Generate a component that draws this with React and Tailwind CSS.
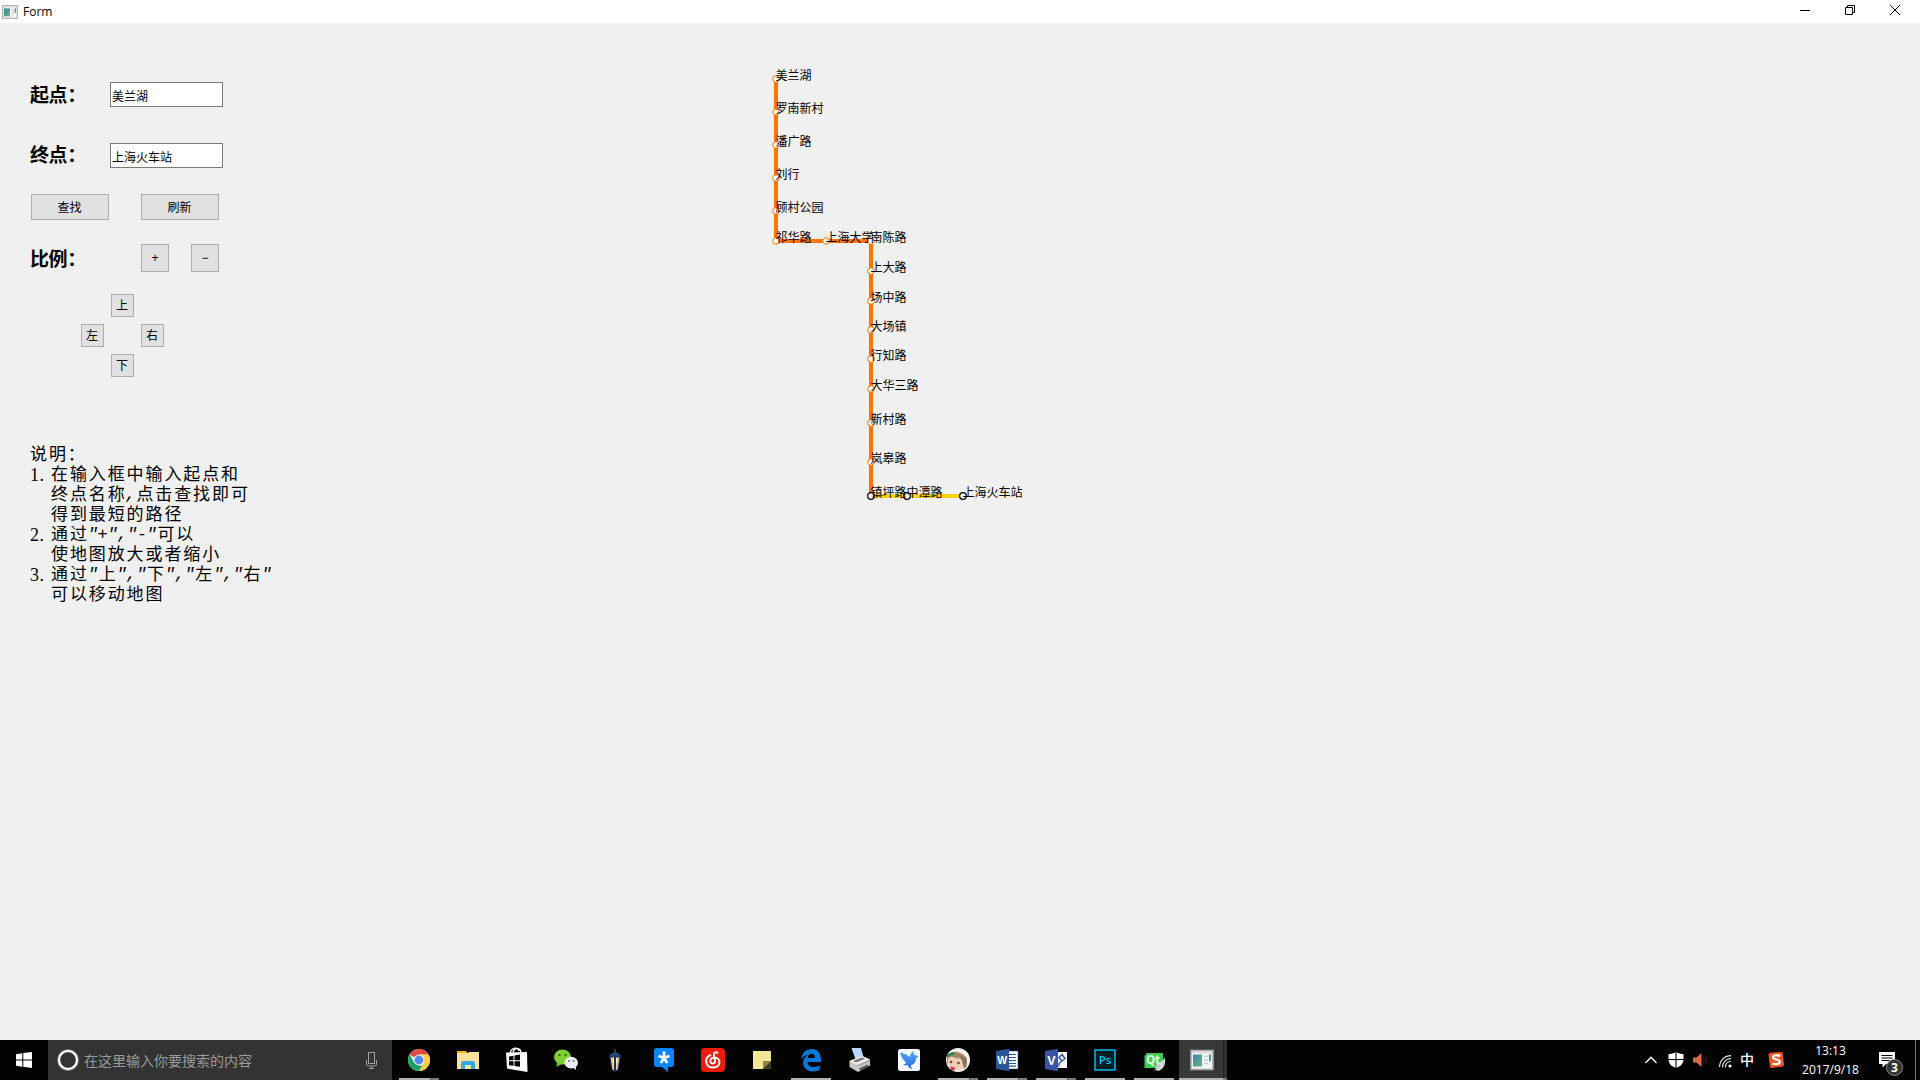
import React from "react";

const UI = "font-['Liberation_Sans','Noto_Sans_CJK_SC',sans-serif]";

const STATIONS = [
  { name: "美兰湖", x: 776, y: 79 },
  { name: "罗南新村", x: 776, y: 112 },
  { name: "潘广路", x: 776, y: 145 },
  { name: "刘行", x: 776, y: 178 },
  { name: "顾村公园", x: 776, y: 211 },
  { name: "祁华路", x: 776, y: 241 },
  { name: "上海大学", x: 826, y: 241 },
  { name: "南陈路", x: 871, y: 241 },
  { name: "上大路", x: 871, y: 271 },
  { name: "场中路", x: 871, y: 301 },
  { name: "大场镇", x: 871, y: 330 },
  { name: "行知路", x: 871, y: 359 },
  { name: "大华三路", x: 871, y: 389 },
  { name: "新村路", x: 871, y: 423 },
  { name: "岚皋路", x: 871, y: 462 },
  { name: "镇坪路", x: 871, y: 496, transfer: true },
  { name: "中潭路", x: 907, y: 496, transfer: true },
  { name: "上海火车站", x: 963, y: 496, transfer: true },
];

const TITLE_HEIGHT = 23;

function RouteMap() {
  return (
    <div className="absolute inset-0 pointer-events-none">
      <svg className="absolute left-0 top-0" width="1920" height="1017" viewBox="0 23 1920 1017">
        <path d="M871 496H963" stroke="#ffd200" strokeWidth="4" fill="none" />
        <path d="M776 79V241H871V496" stroke="#ff7300" strokeWidth="4" fill="none" />
        {STATIONS.map((s) => (
          <circle
            key={s.name}
            cx={s.x}
            cy={s.y}
            r="3.3"
            fill="#fff"
            stroke={s.transfer ? "#000" : "#ff7300"}
            strokeWidth={s.transfer ? 1.3 : 1}
          />
        ))}
      </svg>
      {STATIONS.map((s) => (
        <span
          key={s.name}
          className="absolute text-[12px] leading-[14px] whitespace-nowrap text-black"
          style={{ left: s.x - 0.5, top: s.y - TITLE_HEIGHT - 10 }}
        >
          {s.name}
        </span>
      ))}
    </div>
  );
}

function Button({ className, children }) {
  return (
    <button
      className={`flex shrink-0 items-center justify-center border border-[#adadad] bg-[#e1e1e1] text-[12px] leading-none text-black ${className}`}
    >
      {children}
    </button>
  );
}

function FieldLabel({ className = "", children }) {
  return (
    <span className={`w-20 shrink-0 whitespace-nowrap text-[19px] leading-[24px] font-bold tracking-[-0.4px] text-black ${className}`}>
      {children}
    </span>
  );
}

function Field({ label, value, className, labelClass }) {
  return (
    <label className={`flex h-[25px] items-center ${className}`}>
      <FieldLabel className={labelClass}>{label}</FieldLabel>
      <input
        readOnly
        value={value}
        className="h-[25px] w-[113px] border border-[#7a7a7a] bg-white pt-px pl-px text-[12px] text-black outline-none"
      />
    </label>
  );
}

const HELP = [
  ["", "说明："],
  ["1.", "在输入框中输入起点和"],
  [" ", "终点名称,点击查找即可"],
  [" ", "得到最短的路径"],
  ["2.", '通过"+","-"可以'],
  [" ", "使地图放大或者缩小"],
  ["3.", '通过"上","下","左","右"'],
  [" ", "可以移动地图"],
];

function HelpLine({ mark, text }) {
  const runs = text.split(/([",+\-]+)/).filter(Boolean);
  return (
    <div className="flex h-[20px] whitespace-pre">
      {mark && (
        <span className="w-[21px] font-['Liberation_Serif',serif] text-[18px] tracking-[0.5px]">{mark}</span>
      )}
      {runs.map((run, i) =>
        /[",+\-]/.test(run) ? (
          <span key={i} className="-ml-px mr-px font-['Liberation_Mono',monospace] text-[17px] tracking-[-0.4px] italic">
            {run}
          </span>
        ) : (
          <span key={i} className="text-[17px] tracking-[1.9px]">
            {run}
          </span>
        )
      )}
    </div>
  );
}

function FormIcon({ size }) {
  return (
    <svg width={size} height={size} viewBox="0 0 24 24">
      <defs>
        <linearGradient id="pane" x1="0" y1="0" x2="1" y2="1">
          <stop offset="0" stopColor="#4a7fb0" />
          <stop offset="1" stopColor="#5fb87a" />
        </linearGradient>
      </defs>
      <rect x="1" y="2.5" width="22" height="19" fill="#f4f4f4" stroke="#a3a9ad" strokeWidth="1.6" />
      <path d="M2 4.5h20" stroke="#d5d8da" strokeWidth="1.4" />
      <rect x="3" y="6.5" width="9" height="12" fill="url(#pane)" />
      <path d="M14 8.5h4M14 12h4M14 15.500h4" stroke="#c9cccf" strokeWidth="1.6" />
      <rect x="19" y="6.500" width="2" height="7" fill="url(#pane)" />
    </svg>
  );
}

const ICONS = {
  chrome: (
    <>
      <circle cx="12" cy="12" r="11" fill="#e9f0ea" />
      <path d="M12 12 2.500 6.500A11 11 0 0 1 21.500 6.500H12z" fill="#dd4b3e" />
      <path d="M12 6.500h9.500A11 11 0 0 1 12 23l4.800-8.300z" fill="#ffcd42" />
      <path d="M2.500 6.500 7.300 14.700 12 17.500h3.200L12 23A11 11 0 0 1 2.500 6.500z" fill="#1aa260" />
      <circle cx="12" cy="12" r="5.400" fill="#f1f1f1" />
      <circle cx="12" cy="12" r="4.400" fill="#4a8af4" />
    </>
  ),
  folder: (
    <>
      <path d="M1 3h9l1.500 2H22v15H1z" fill="#f0c34a" />
      <path d="M1 5h11l1-1h10v17H1z" fill="#fbe29a" />
      <path d="M1 3h9v2H1z" fill="#f5b400" />
      <path d="M5 21v-6.500L6.500 13h11l1.500 1.500V21h-4v-4H9v4z" fill="#35a9e1" />
    </>
  ),
  store: (
    <>
      <path d="M5 5.500C6 0 12-2 14 3M8 4.500C9 0 15-1 16 4" stroke="#fff" strokeWidth="1.300" fill="none" />
      <path d="M1 4.500 22 4l.500 20L2 20.500z" fill="#fff" />
      <path d="M4 8.500l4.500-.800v4.600H4zM9.500 7.500l5.500-.900v5.700H9.500zM4 13.300h4.500v4.500L4 17.200zM9.500 13.300H15v5.500l-5.500-.800z" fill="#000" />
    </>
  ),
  wechat: (
    <>
      <ellipse cx="8.500" cy="9" rx="8.500" ry="7.500" fill="#7bd032" />
      <path d="M3 14 2.500 19 8 16z" fill="#6bc125" />
      <circle cx="5.500" cy="7" r="1.100" fill="#24520a" />
      <circle cx="11.500" cy="7" r="1.100" fill="#24520a" />
      <ellipse cx="17.200" cy="14.700" rx="6.800" ry="5.900" fill="#eceff1" />
      <path d="M19 19.500l3 2.500v-5z" fill="#dfe3e6" />
      <circle cx="15" cy="13" r=".9" fill="#666" />
      <circle cx="19.500" cy="13" r=".9" fill="#666" />
    </>
  ),
  lantern: (
    <>
      <path d="M11.200 1h1.600v3l4.700 2.500V9h-11V6.500L11.200 4z" fill="#1f4778" />
      <path d="M6.200 8.500h11.600L15.500 21l-2 2.500h-3l-2-2.500z" fill="#16304f" />
      <path d="M7.600 9.500h2.200l1 12.500h-1.300z" fill="#f2c873" />
      <path d="M9.800 9.500h1.200V22h-.4z" fill="#fff" />
      <path d="M16.400 9.500h-2.200l-1 12.500h1.300z" fill="#f2c873" />
      <path d="M14.200 9.500H13V22h.4z" fill="#fff" />
    </>
  ),
  star: (
    <>
      <path d="M5 0h14q3 0 3 3v13q0 3-3 3h-3v5l-6-5H5q-3 0-3-3V3q0-3 3-3z" fill="#0a84ff" />
      <path d="M12 3.500v6M12 9.800 6.500 8M12 9.800 17.500 8M12 9.800 8.800 15M12 9.800l3.200 5.200" stroke="#fff" strokeWidth="2.700" />
    </>
  ),
  netease: (
    <>
      <rect width="24" height="24" rx="4" fill="#eb1c0b" />
      <path d="M16.500 4.800c-2-1.200-4 0-3.600 2l1.300 5.800c.4 3.800-4.900 3.800-4.900.4 0-3 3.500-4.300 6.400-3 4.600 2.200 3.300 9.500-3.500 9.500-8.300 0-9.200-9.800-2.700-12.300" stroke="#fff" strokeWidth="1.900" strokeLinecap="round" fill="none" />
    </>
  ),
  note: (
    <>
      <path d="M3 3h18v10l-8 8H3z" fill="#f3e696" />
      <path d="M13 13h8v8h-8z" fill="#3f3a22" />
      <path d="M13 13h8l-8 8z" fill="#8f854c" />
    </>
  ),
  edge: (
    <path d="M2 11.500C3 5 7 1 12.500 1 19 1 22 6 22 11v3H8.500c.3 3.700 3.200 5 6.300 5 2.400 0 4.500-.7 6-1.700v4.500C19 23 16.500 23.500 14 23.500 8 23.500 4 20 4 14.800c0-3.600 2-6.500 5-8C6.500 7 4 8.600 2 11.500zM8.800 10H16c0-2.800-1.200-4.300-3.400-4.300-2.300 0-3.600 1.900-3.800 4.300z" fill="#0078d7" />
  ),
  printer: (
    <>
      <path d="M3.500 0h9.500l2.500 9-8 2.500z" fill="#b9d6fb" />
      <path d="M1.500 13 14 8l8 3.500v6L10 24l-8.500-5z" fill="#c9c9c9" />
      <path d="M1.500 13 14 8l8 3.500L9.500 17z" fill="#ededed" />
      <path d="M9.500 17 22 11.500v2L9.500 19z" fill="#a9a9a9" />
      <path d="M5 13l9-3.500 3 1.300-9 3.800z" fill="#777" />
      <path d="M11 20.500l8.500-4 1 1.500-8 4.500z" fill="#4f4f4f" />
    </>
  ),
  bird: (
    <>
      <defs>
        <linearGradient id="wing" x1="0" y1="0" x2="0" y2="1">
          <stop offset="0" stopColor="#59aefb" />
          <stop offset="1" stopColor="#1f66e5" />
        </linearGradient>
      </defs>
      <rect x="1" y="1" width="22" height="22" rx="2.500" fill="#f5f8ff" />
      <path d="M3 4.500c3.500.5 7 1.800 9.500 4.500C13.500 6 14.500 4 16.500 2.500c-.3 2 .2 3.500 1.200 4.800 1.800-.5 3 .2 3.800 1.700-2 0-2.500.8-2.700 2.500-.4 3.200-2 5-4.800 5.500-.3 1.800.2 3 1.500 4.500-2.500-.8-4-2.300-5-4.500-1.500.6-3 .6-4.500 0 1.500-.6 2.500-1.400 3.200-2.500C6 12 4 9 3 4.500z" fill="url(#wing)" />
    </>
  ),
  avatar: (
    <>
      <circle cx="12" cy="12" r="12" fill="#f5f3ef" />
      <path d="M1 8c5-7 15-5 20 2v8l-3 3-4-11-6-2-4 3-3 5z" fill="#a58f6b" />
      <path d="M2 11c4-4 10-4 14 1l1 8c-4 4-12 3-15-3z" fill="#efd0b5" />
      <path d="M1 6l6-2 3 2-5 2-4 1z" fill="#388457" />
      <path d="M12 7c5 0 8 3 9 8l-3 5c0-5-2-9-6-13z" fill="#87745a" />
      <path d="M5 9l5-2 4 4-5-1.500z" fill="#9a8362" />
      <circle cx="5" cy="14" r="1.300" fill="#68493f" />
      <circle cx="12.500" cy="15" r="1.300" fill="#68493f" />
      <path d="M4.500 18.500l4.500 1-1 3.500-3-1.500z" fill="#c93647" />
    </>
  ),
  word: (
    <>
      <rect x="12" y="3" width="11" height="18" fill="#fff" stroke="#2b579a" strokeWidth=".6" />
      <path d="M14 6.500h7M14 9.500h7M14 12.500h7M14 15.500h7M14 18.200h7" stroke="#2b579a" strokeWidth="1.200" />
      <path d="M1 3 14 .800v22.400L1 21z" fill="#2b579a" />
      <text x="7.300" y="16" textAnchor="middle" fontSize="10.500" fontWeight="700" fontFamily="Liberation Sans" fill="#fff">W</text>
    </>
  ),
  visio: (
    <>
      <rect x="12" y="4" width="11" height="16" fill="#fff" />
      <path d="M15 18.500v-3l6-5-3-4-3 3 3 3.500" stroke="#3955a3" strokeWidth="1.500" fill="none" />
      <path d="M1 3 14 .800v22.400L1 21z" fill="#3955a3" />
      <text x="7.300" y="16.500" textAnchor="middle" fontSize="12.500" fontWeight="700" fontFamily="Liberation Sans" fill="#fff">V</text>
    </>
  ),
  ps: (
    <>
      <rect x="2" y="2" width="20" height="20" fill="#001d26" stroke="#00b8f0" strokeWidth="1.500" />
      <text x="12" y="16" textAnchor="middle" fontSize="11.500" fontWeight="600" fontFamily="Open Sans" fill="#00c8ff">Ps</text>
    </>
  ),
  qt: (
    <>
      <path d="M5 5h16v12l-3 3H2.500V8z" fill="#41cd52" />
      <text x="11" y="16" textAnchor="middle" fontSize="11.500" fontWeight="700" fontFamily="Open Sans" fill="#e9ffe9">Qt</text>
      <path d="M23 9.500c1 6-1 12-7 13.500-3-1-3.500-4-1-6.500 3-2.500 5.500-3 8-7z" fill="#d6d6d6" />
      <path d="M12.500 22.500 18 17" stroke="#aaa" />
    </>
  ),
};

const TASKS = [
  { id: "chrome", open: true, stacked: true },
  { id: "folder" },
  { id: "store" },
  { id: "wechat" },
  { id: "lantern" },
  { id: "star" },
  { id: "netease" },
  { id: "note" },
  { id: "edge", open: true },
  { id: "printer" },
  { id: "bird" },
  { id: "avatar", open: true, stacked: true },
  { id: "word", open: true, stacked: true },
  { id: "visio", open: true, stacked: true },
  { id: "ps", open: true },
  { id: "qt", open: true },
];

function TaskButton({ id, open, stacked }) {
  return (
    <div className="flex h-10 w-[49px] flex-col items-center">
      <div className="flex h-[38px] items-center pt-[2px]">
        <svg width="24" height="24" viewBox="0 0 24 24" overflow="visible">
          {ICONS[id]}
        </svg>
      </div>
      {open && (
        <div className="flex h-[2px] w-[40px] bg-[#b5b0b2]">
          {stacked && <div className="ml-auto h-full w-[9px] border-l border-[#555] bg-[#7d7a7b]" />}
        </div>
      )}
    </div>
  );
}

function Taskbar() {
  return (
    <footer className="flex h-10 w-full shrink-0 bg-[#030303] text-white">
      <div className="flex w-12 items-center justify-center">
        <svg width="16" height="16" viewBox="0 0 16 16" fill="#fff">
          <path d="M0 2.200 6.300 1.300V7.500H0zM7.300 1.100 16 0v7.500H7.300zM0 8.500h6.300v6.200L0 13.800zM7.300 8.500H16V16l-8.700-1.200z" />
        </svg>
      </div>
      <div className="flex w-[344px] items-center bg-[#333]">
        <svg className="ml-[9px]" width="22" height="22" viewBox="0 0 22 22">
          <circle cx="11" cy="11" r="9.300" fill="none" stroke="#8a8a8a" strokeWidth="3" />
          <circle cx="11" cy="11" r="9" fill="none" stroke="#fff" strokeWidth="2" />
        </svg>
        <span className="mt-[2px] ml-[5px] text-[14px] leading-5 text-[#9a9a9a] whitespace-nowrap">在这里输入你要搜索的内容</span>
        <svg className="mr-[15px] ml-auto" width="11" height="17" viewBox="0 0 11 17" fill="none" stroke="#a0a0a0">
          <rect x="2.500" y=".5" width="6" height="11" />
          <path d="M.5 8v4q0 2 2 2h6q2 0 2-2V8M5.500 14v2.500M3 16.500h5" />
        </svg>
      </div>
      <div className="ml-[2px] flex">
        {TASKS.map((t) => (
          <TaskButton key={t.id} {...t} />
        ))}
      </div>
      <div className="ml-px flex h-10 w-12 flex-col bg-[#383838]">
        <div className="flex flex-1">
          <div className="flex w-[44px] items-center justify-center pt-[2px] pl-[2px]">
            <FormIcon size={24} />
          </div>
          <div className="flex-1 border-l border-[#222] bg-[#303030]" />
        </div>
        <div className="flex h-[2px] bg-[#b5b0b2]">
          <div className="ml-auto w-1 bg-[#7d7a7b]" />
        </div>
      </div>
      <div className="ml-auto flex items-center">
        <svg width="12" height="8" viewBox="0 0 12 8" fill="none" stroke="#fff" strokeWidth="1.300">
          <path d="M.5 7 6 1.300 11.500 7" />
        </svg>
        <svg className="ml-[11px]" width="16" height="16" viewBox="0 0 16 16">
          <path d="M8 0c2.500 1.500 5 2 7.500 2v5c0 4.500-3 7.500-7.500 9C3.500 14.500.5 11.500.5 7V2C3 2 5.500 1.500 8 0z" fill="#fff" />
          <path d="M8 0v16M0 7.500h16" stroke="#000" strokeWidth="1.100" />
        </svg>
        <svg className="ml-[9px]" width="16" height="14" viewBox="0 0 16 14">
          <path d="M0 4.500h3.500L8.500 0v14L3.500 9.500H0z" fill="#e0673f" />
          <path d="M10.500 4.500q1.200 2.500 0 5M12.800 2.500q2.200 4.500 0 9" stroke="#4d2015" fill="none" />
        </svg>
        <svg className="ml-[10px] mt-[3px]" width="13" height="13" viewBox="0 0 13 13" fill="none" stroke="#e8e8e8" strokeWidth="1.100">
          <path d="M.6 12C.6 5.500 5.500.6 12 .6M3.600 12.300C3.600 7.200 7.200 3.600 12 3.600M6.500 12.500C6.500 8.800 8.800 6.500 12 6.500" />
          <circle cx="11" cy="11" r="1.600" fill="#fff" stroke="none" />
        </svg>
        <span className="ml-[8px] text-[14px] leading-none font-medium">中</span>
        <svg className="ml-[14px]" width="16" height="16" viewBox="0 0 16 16">
          <path d="M2.500.8 13 0q1.500 0 1.800 1.500L16 12.500q0 1.500-1.500 2L4 16q-1.500 0-2-1.500L.5 3q0-1.700 2-2.200z" fill="#f4511e" />
          <path d="M12.300 3.800C9 2.700 5 3.300 5 5.400c0 2.600 6.800 1.400 6.800 4.300 0 2.400-4.400 3-7.600 1.800" fill="none" stroke="#fff" strokeWidth="2.300" />
        </svg>
        <div className="ml-[17px] flex w-[59px] flex-col items-center font-['Open_Sans','Noto_Sans',sans-serif] text-[12px] leading-[19px] tracking-[0px] whitespace-nowrap">
          <span>13:13</span>
          <span>2017/9/18</span>
        </div>
        <div className="relative ml-[19px] h-[24px] w-[25px]">
          <svg className="absolute top-[4px] left-0" width="16" height="16" viewBox="0 0 16 16">
            <path d="M0 0h16v12H7l-3.500 3.500V12H0z" fill="#fff" />
            <path d="M2.500 3.500h11M2.500 6h11M2.500 8.500h8" stroke="#000" />
          </svg>
          <span className="absolute top-[11px] left-[7px] flex size-[17px] items-center justify-center rounded-full border border-[#8a8a8a] bg-[#333] font-['Open_Sans',sans-serif] text-[12px] leading-none font-bold">
            3
          </span>
        </div>
        <div className="ml-[11px] mr-[4px] h-10 w-px bg-[#777]" />
      </div>
    </footer>
  );
}

function TitleBar() {
  return (
    <header className="flex h-[23px] shrink-0 items-center bg-white">
      <span className="ml-[2px] flex">
        <FormIcon size={16} />
      </span>
      <span className="mt-px ml-[5px] font-['Open_Sans','Noto_Sans',sans-serif] text-[12px] leading-none text-black">Form</span>
      <div className="mr-[20px] mb-[3px] ml-auto flex items-center gap-[35px]">
        <svg width="10" height="10" viewBox="0 0 10 10" stroke="#000">
          <path d="M0 5.500h10" />
        </svg>
        <svg width="10" height="10" viewBox="0 0 10 10" fill="none" stroke="#000">
          <path d="M.5 2.500h7v7h-7zM2.500 2.500v-2h7v7h-2" />
        </svg>
        <svg width="10" height="10" viewBox="0 0 10 10" stroke="#000">
          <path d="M0 0l10 10M10 0L0 10" />
        </svg>
      </div>
    </header>
  );
}

export default function App() {
  return (
    <div className={`flex h-[1080px] w-[1920px] flex-col overflow-hidden bg-[#f0f0f0] ${UI}`}>
      <TitleBar />
      <main className="relative flex-1">
        <RouteMap />
        <section className="flex w-[280px] flex-col pt-[59px] pl-[30px]">
          <Field label="起点：" value="美兰湖" labelClass="pt-[2px]" />
          <Field label="终点：" value="上海火车站" className="mt-[36px]" />
          <div className="mt-[26px] ml-px flex gap-[32px]">
            <Button className="h-[26px] w-[78px] pt-px pr-px">查找</Button>
            <Button className="h-[26px] w-[78px] pt-px pr-px">刷新</Button>
          </div>
          <div className="mt-[24px] flex h-[28px] items-center">
            <FieldLabel className="pt-[4px]">比例：</FieldLabel>
            <Button className="ml-[31px] size-[28px]">+</Button>
            <Button className="ml-[22px] size-[28px]">−</Button>
          </div>
          <div className="mt-[22px] ml-[51px] grid w-max grid-cols-[23px_23px_23px] gap-[7px]">
            <Button className="col-start-2 size-[23px] pt-px pr-px">上</Button>
            <Button className="col-start-1 size-[23px] pt-px pr-px">左</Button>
            <Button className="col-start-3 size-[23px] pt-px pr-px">右</Button>
            <Button className="col-start-2 size-[23px] pt-px pr-px">下</Button>
          </div>
          <div className="mt-[68px] text-black leading-[20px]">
            {HELP.map(([mark, text]) => (
              <HelpLine key={text} mark={mark} text={text} />
            ))}
          </div>
        </section>
      </main>
      <Taskbar />
    </div>
  );
}
